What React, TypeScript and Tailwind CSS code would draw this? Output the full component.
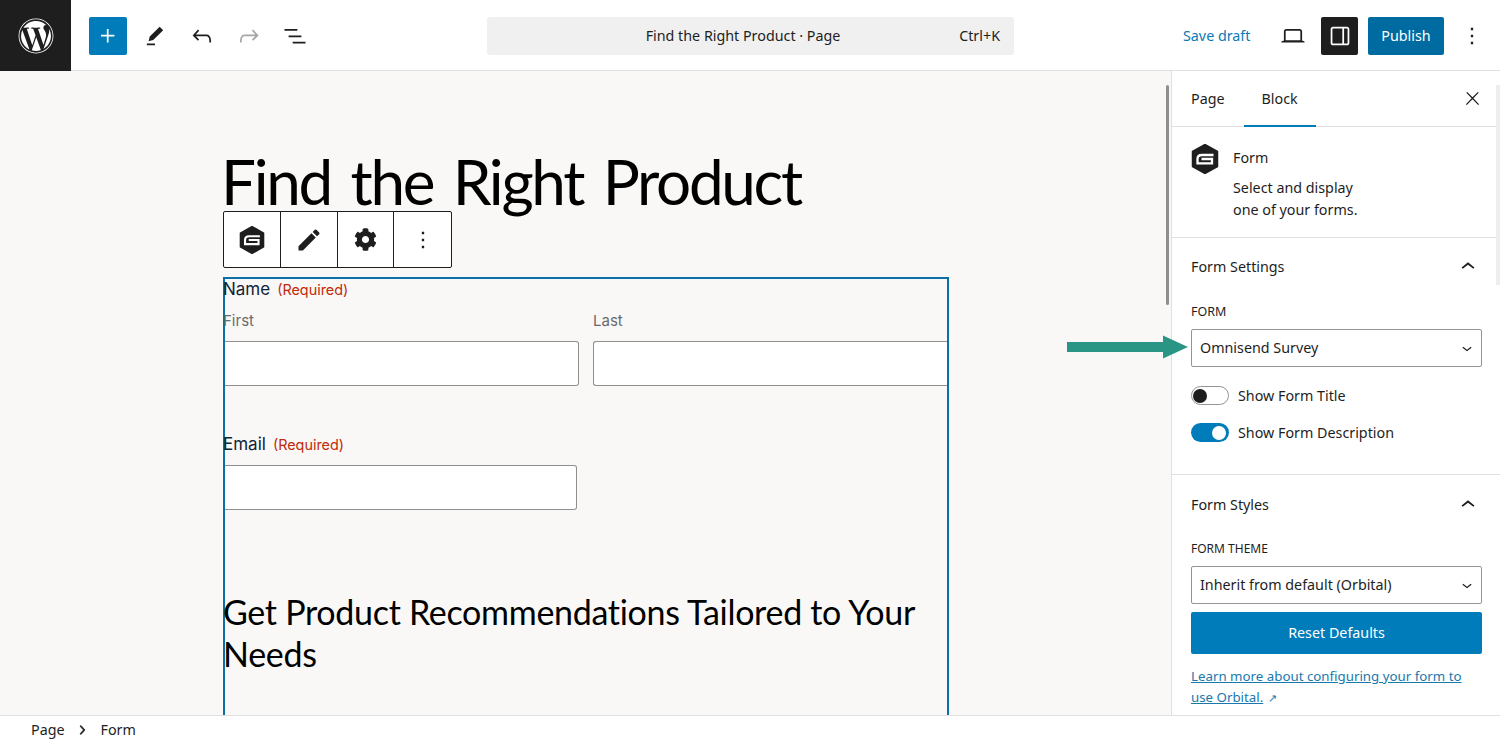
import React from "react";
import { FaWordpress, FaCog } from "react-icons/fa";
import { MdEdit } from "react-icons/md";

const Icon = ({ d, className = "" }: { d: string; className?: string }) => (
  <svg viewBox="0 0 24 24" fill="currentColor" className={className}>
    <path d={d} />
  </svg>
);

const PLUS = "M11 12.5V17.5H12.5V12.5H17.5V11H12.5V6H11V11H6V12.5H11Z";
const TOOLS = "m19 7-3-3-8.5 8.5-1 4 4-1L19 7Zm-7 11.5H5V20h7v-1.5Z";
const UNDO = "M18.3 11.7c-.6-.6-1.4-.9-2.3-.9H6.7l2.9-3.3-1.1-1-4.5 5L8.5 16l1-1-2.7-2.7H16c.5 0 .9.2 1.3.5 1 1 1 3.4 1 4.5v.3h1.5v-.2c0-1.5 0-4.3-1.5-5.7z";
const REDO = "M15.6 6.5l-1.1 1 2.9 3.3H8c-.9 0-1.7.3-2.3.9-1.4 1.5-1.4 4.2-1.4 5.6v.2h1.5v-.3c0-1.1 0-3.5 1-4.5.3-.3.7-.5 1.3-.5h9.2L14.5 15l1.1 1.1 4.6-4.6-4.6-5z";
const LIST = "M3 6h11v1.5H3V6Zm3.5 5.5h11V13h-11v-1.5ZM21 17H10v1.5h11V17Z";
const LAPTOP = "M20.5 16h-.7V8c0-1.1-.9-2-2-2H6.2c-1.1 0-2 .9-2 2v8h-.7c-.8 0-1.5.7-1.5 1.5h20c0-.8-.7-1.5-1.5-1.5zM5.7 8c0-.3.2-.5.5-.5h11.6c.3 0 .5.2.5.5v7.6H5.7V8z";
const SIDEBAR = "M18 4H6c-1.1 0-2 .9-2 2v12c0 1.1.9 2 2 2h12c1.1 0 2-.9 2-2V6c0-1.1-.9-2-2-2zm-4 14.5H6c-.3 0-.5-.2-.5-.5V6c0-.3.2-.5.5-.5h8v13zm4.5-.5c0 .3-.2.5-.5.5h-2.5v-13H18c.3 0 .5.2.5.5v12z";
const MORE = "M13 19h-2v-2h2v2zm0-6h-2v-2h2v2zm0-6h-2V5h2v2z";
const CLOSE = "M13 11.8l6.1-6.3-1-1-6.1 6.2-6.1-6.2-1 1 6.1 6.3-6.5 6.7 1 1 6.5-6.6 6.5 6.6 1-1z";
const UP = "M6.5 12.4L12 8l5.5 4.4-.9 1.2L12 10l-4.5 3.6-1-1.2z";
const DOWN = "M17.5 11.6L12 16l-5.5-4.4.9-1.2L12 14l4.5-3.6 1 1.2z";
const RIGHT = "M10.6 6L9.4 7l4.6 5-4.6 5 1.2 1 5.4-6z";

const GravityIcon = ({ className = "" }: { className?: string }) => (
  <svg viewBox="0 0 28 30" className={className}>
    <path d="M14 0.5 26.5 7.5V22.5L14 29.5 1.5 22.5V7.5Z" fill="#1e1e1e" stroke="#1e1e1e" strokeLinejoin="round" strokeWidth="1.5" />
    <path d="M22.5 11H11C8.2 11 6.5 12.6 6.5 15V19.4H21V15H10.5" fill="none" stroke="#fff" strokeWidth="2.3" />
  </svg>
);

const SelectBox = ({ label }: { label: string }) => (
  <div className="h-[38px] border border-[#949494] rounded-[2px] bg-white flex items-center justify-between pl-2 pr-[4px] text-[#1e1e1e]">
    <span>{label}</span>
    <Icon d={DOWN} className="w-5 h-5" />
  </div>
);

const Toggle = ({ on, label }: { on: boolean; label: string }) => (
  <div className="h-[19px] flex items-center gap-[9px] text-[#1e1e1e]">
    {on ? (
      <span className="w-[38px] h-[19px] rounded-full bg-[#007cba] flex items-center justify-end pr-[3px]">
        <span className="w-[14px] h-[14px] rounded-full bg-white" />
      </span>
    ) : (
      <span className="w-[38px] h-[19px] rounded-full bg-white border border-[#949494] flex items-center pl-px">
        <span className="w-[14px] h-[14px] rounded-full bg-[#1e1e1e]" />
      </span>
    )}
    <span>{label}</span>
  </div>
);

const PanelTitle = ({ title }: { title: string }) => (
  <div className="flex items-center justify-between text-[#1e1e1e]">
    <span>{title}</span>
    <Icon d={UP} className="w-7 h-7" />
  </div>
);

const ToolCell = ({ children, last }: { children: React.ReactNode; last?: boolean }) => (
  <div className={`w-[57px] flex items-center justify-center ${last ? "" : "border-r border-[#1e1e1e]"}`}>{children}</div>
);

const TextField = ({ className = "" }: { className?: string }) => (
  <div className={`h-[45px] bg-white border border-[#8f8f8f] rounded-[3px] ${className}`} />
);

export default function App() {
  return (
    <div className="relative h-[743px] w-[1500px] overflow-hidden flex flex-col bg-white text-[#1e1e1e] text-[14.3px] [font-family:'Noto_Sans',sans-serif]">
      <header className="h-[71px] shrink-0 flex items-center border-b border-[#e0e0e0] pt-[2px]">
        <div className="self-start -mt-[2px] w-[71px] h-[71px] bg-[#1e1e1e] flex items-center justify-center text-white">
          <FaWordpress className="w-[36px] h-[36px]" />
        </div>
        <div className="ml-[18px] w-[38px] h-[38px] rounded-[2px] bg-[#007cba] text-white flex items-center justify-center">
          <Icon d={PLUS} className="w-7 h-7" />
        </div>
        <Icon d={TOOLS} className="ml-[14px] w-7 h-7" />
        <Icon d={UNDO} className="ml-[19px] w-7 h-7" />
        <Icon d={REDO} className="ml-[19px] w-7 h-7 text-[#a6a6a6]" />
        <Icon d={LIST} className="ml-[18px] w-7 h-7" />
        <div className="ml-[178px] w-[527px] h-[38px] rounded-[3px] bg-[#f0f0f0] relative flex items-center justify-center pr-[15px]">
          <span>Find the Right Product · Page</span>
          <span className="absolute right-[14px]">Ctrl+K</span>
        </div>
        <span className="ml-[169px] text-[#0a7ab5] w-[67px] whitespace-nowrap">Save draft</span>
        <Icon d={LAPTOP} className="ml-[29px] w-7 h-7" />
        <div className="ml-[14px] w-[37px] h-[38px] rounded-[2px] bg-[#1e1e1e] text-white flex items-center justify-center">
          <Icon d={SIDEBAR} className="w-7 h-7" />
        </div>
        <div className="ml-[10px] w-[76px] h-[38px] rounded-[2px] bg-[#006ba1] text-white flex items-center justify-center">Publish</div>
        <Icon d={MORE} className="ml-[14px] w-7 h-7" />
      </header>

      <div className="flex-1 flex min-h-0">
        <main className="w-[1171px] shrink-0 bg-[#f9f8f6] overflow-hidden pl-[223px] pt-[70px] relative">
          <h1 className="-ml-[2px] text-[62px] leading-[80px] text-black [font-family:Lato,sans-serif] tracking-[-2.3px] [word-spacing:6px] whitespace-nowrap">Find the Right Product</h1>
          <div className="mt-[-10px] w-[229px] h-[57px] flex bg-white border border-[#1e1e1e] rounded-[2px]">
            <ToolCell><GravityIcon className="w-[26px] h-[28px]" /></ToolCell>
            <ToolCell><MdEdit className="w-[28px] h-[28px]" /></ToolCell>
            <ToolCell><FaCog className="w-[23px] h-[23px]" /></ToolCell>
            <ToolCell last><Icon d={MORE} className="w-7 h-7" /></ToolCell>
          </div>
          <div className="mt-[9px] w-[726px] h-[500px] border-2 border-[#0a70a8] border-b-0 [font-family:Inter,sans-serif]">
            <div className="text-[17px] leading-[20px] -ml-[2px] flex items-baseline gap-[7px] text-[#112337]">
              <span>Name</span>
              <span className="text-[14.4px] text-[#c02b0a]">(Required)</span>
            </div>
            <div className="mt-[11px] flex gap-[14px] text-[15px] text-[#6b6b6b]">
              <div className="w-[354px] shrink-0">
                <div className="-ml-[2px] leading-[20px]">First</div>
                <TextField className="mt-[10px] border-l-0 rounded-l-none" />
              </div>
              <div className="w-[354px] shrink-0">
                <div className="leading-[20px]">Last</div>
                <TextField className="mt-[10px] border-r-0 rounded-r-none" />
              </div>
            </div>
            <div className="mt-[48px] text-[17px] leading-[20px] -ml-[2px] flex items-baseline gap-[7px] text-[#112337]">
              <span>Email</span>
              <span className="text-[14.4px] text-[#c02b0a]">(Required)</span>
            </div>
            <TextField className="mt-[10px] w-[352px] border-l-0 rounded-l-none" />
            <h2 className="mt-[81px] -ml-[2px] text-[34px] leading-[42px] text-black [font-family:Lato,sans-serif] tracking-[-0.3px]">
              Get Product Recommendations Tailored to Your Needs
            </h2>
          </div>
          <div className="absolute left-[1166px] top-[14px] w-[3px] h-[220px] rounded-full bg-[#8f8f8f]" />
        </main>

        <aside className="flex-1 min-w-0 border-l border-[#e0e0e0] overflow-hidden relative">
          <div className="h-[56px] border-b border-[#e0e0e0] flex items-center pl-[19px] pr-[17px]">
            <span className="pt-px">Page</span>
            <span className="ml-[37px] pt-px relative h-full flex items-center">
              Block
              <span className="absolute -left-[18px] -right-[18px] bottom-[-1px] h-[2px] bg-[#007cba]" />
            </span>
            <Icon d={CLOSE} className="ml-auto w-[21px] h-[21px]" />
          </div>
          <div className="h-[111px] border-b border-[#e0e0e0] pl-[19px] pt-[17px] flex gap-[14px]">
            <GravityIcon className="w-[28px] h-[30px] shrink-0" />
            <div>
              <div className="leading-[28px] h-[33px]">Form</div>
              <div className="leading-[22px]">Select and display<br />one of your forms.</div>
            </div>
          </div>
          <div className="h-[237px] border-b border-[#e0e0e0] px-[18px] pl-[19px] pt-[15px]">
            <PanelTitle title="Form Settings" />
            <div className="mt-[22px] text-[12.5px] leading-[18px]">FORM</div>
            <div className="mt-[8px]"><SelectBox label="Omnisend Survey" /></div>
            <div className="mt-[19px]"><Toggle on={false} label="Show Form Title" /></div>
            <div className="mt-[18px]"><Toggle on label="Show Form Description" /></div>
          </div>
          <div className="px-[18px] pl-[19px] pt-[16px]">
            <PanelTitle title="Form Styles" />
            <div className="mt-[21px] text-[12px] leading-[18px]">FORM THEME</div>
            <div className="mt-[8px]"><SelectBox label="Inherit from default (Orbital)" /></div>
            <div className="mt-[8px] h-[42px] rounded-[2px] bg-[#007cba] text-white flex items-center justify-center">Reset Defaults</div>
            <div className="mt-[12px] leading-[21px] text-[13.3px] text-[#1a78ad]">
              <div className="underline">Learn more about configuring your form to</div>
              <div className="flex items-center gap-[5px]">
                <span className="underline">use Orbital.</span>
                <span className="text-[11px]">↗</span>
              </div>
            </div>
          </div>
          <div className="absolute right-0 top-[14px] w-[4px] h-[200px] bg-[#eeeeee]" />
        </aside>
      </div>

      <footer className="h-[28px] shrink-0 border-t border-[#e0e0e0] flex items-center pl-[31px]">
        <span>Page</span>
        <svg viewBox="0 0 24 24" fill="currentColor" stroke="currentColor" strokeWidth="1" className="ml-[8px] w-[18px] h-[18px]">
          <path d={RIGHT} />
        </svg>
        <span className="ml-[10px]">Form</span>
      </footer>

      <svg viewBox="0 0 122 24" className="absolute left-[1067px] top-[335px] w-[122px] h-[24px]">
        <path d="M0 7H96V0.5L121 12 96 23.5V17H0Z" fill="#2a9585" />
      </svg>
    </div>
  );
}
